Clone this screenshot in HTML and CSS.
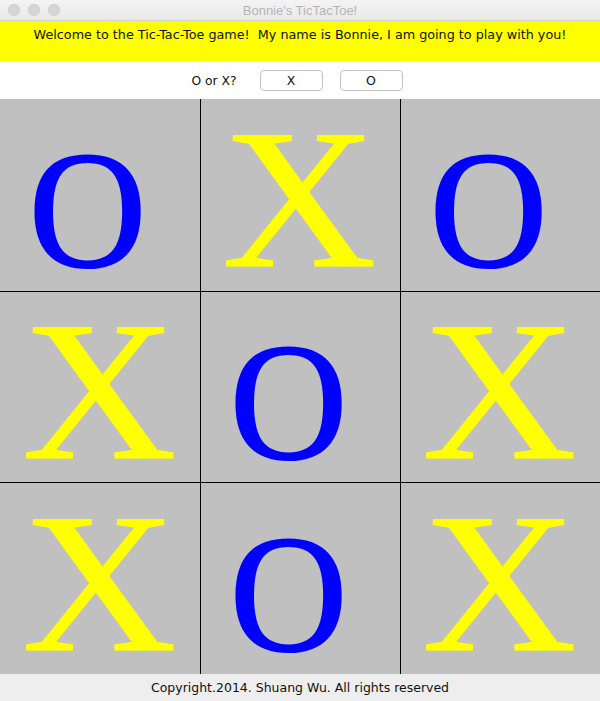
FILE: index.html
```html
<!DOCTYPE html>
<html>
<head>
<meta charset="utf-8">
<link rel="stylesheet" href="styles.css">
</head>
<body>
<div class="window">
  <div class="titlebar">
    <div class="lights"><span class="light"></span><span class="light"></span><span class="light"></span></div>
    <div class="title">Bonnie's TicTacToe!</div>
  </div>
  <div class="banner">Welcome to the Tic-Tac-Toe game!&nbsp; My name is Bonnie, I am going to play with you!</div>
  <div class="choose">
    <span class="prompt">O or X?</span>
    <button class="btn">X</button>
    <button class="btn">O</button>
  </div>
  <div class="board">
    <div class="cell"><span class="mark o">O</span></div>
    <div class="cell"><span class="mark x">X</span></div>
    <div class="cell"><span class="mark o">O</span></div>
    <div class="cell"><span class="mark x">X</span></div>
    <div class="cell"><span class="mark o">O</span></div>
    <div class="cell"><span class="mark x">X</span></div>
    <div class="cell"><span class="mark x">X</span></div>
    <div class="cell"><span class="mark o">O</span></div>
    <div class="cell"><span class="mark x">X</span></div>
  </div>
  <div class="footer">Copyright.2014. Shuang Wu. All rights reserved</div>
</div>
</body>
</html>
```
FILE: styles.css
```css
html, body {
  margin: 0;
  padding: 0;
  background: #ececec;
}
.window {
  width: 600px;
  height: 701px;
  display: flex;
  flex-direction: column;
  font-family: "DejaVu Sans", "Liberation Sans", sans-serif;
  overflow: hidden;
}
.titlebar {
  height: 21px;
  background: linear-gradient(#f4f4f4, #e9e9e9);
  border-bottom: 1px solid #d2d2d2;
  display: flex;
  align-items: center;
  box-sizing: border-box;
}
.lights {
  display: flex;
  gap: 8px;
  padding-left: 8px;
}
.light {
  width: 12px;
  height: 12px;
  border-radius: 50%;
  background: #d6d6d6;
  box-shadow: inset 0 0 0 1px #cfcfcf;
}
.title {
  flex: 1;
  text-align: center;
  margin-left: -60px;
  font-family: "Liberation Sans", sans-serif;
  font-size: 13px;
  color: #b4b4b4;
}
.banner {
  height: 40px;
  box-sizing: border-box;
  background: #ffff00;
  padding-top: 6px;
  text-align: center;
  font-size: 12.75px;
  color: #111;
}
.choose {
  height: 38px;
  background: #ffffff;
  display: flex;
  align-items: center;
  justify-content: center;
  padding: 1px 6px 0 0;
  box-sizing: border-box;
}
.prompt {
  font-size: 12.3px;
  color: #111;
  margin-right: 23px;
}
.btn {
  width: 63px;
  height: 21px;
  margin: 0 17px 0 0;
  padding: 0;
  background: #ffffff;
  border: 1px solid #c4c4c4;
  border-radius: 4px;
  font-family: "DejaVu Sans", sans-serif;
  font-size: 12.5px;
  color: #111;
}
.btn:last-child { margin-right: 0; }
.board {
  height: 575px;
  background: #000;
  display: grid;
  grid-template-columns: 200px 199px 199px;
  grid-template-rows: 192px 190px 191px;
  gap: 1px;
  flex: none;
}
.cell {
  background: #c0c0c0;
  display: flex;
  align-items: center;
  justify-content: center;
  overflow: hidden;
}
.mark {
  font-family: "Liberation Serif", serif;
  line-height: 150px;
}
.mark.x {
  color: #ffff00;
  font-size: 200px;
  -webkit-text-stroke: 1px #ffff00;
  transform: translate(-1px, 4px) scaleX(1.07);
}
.mark.o {
  color: #0000ff;
  font-size: 168px;
  -webkit-text-stroke: 2px #0000ff;
  transform: translate(-12px, 14px) scaleX(0.97);
}
.footer {
  flex: 1;
  background: #eeeeee;
  text-align: center;
  font-size: 12.5px;
  color: #111;
  padding-top: 6px;
  box-sizing: border-box;
}
```
